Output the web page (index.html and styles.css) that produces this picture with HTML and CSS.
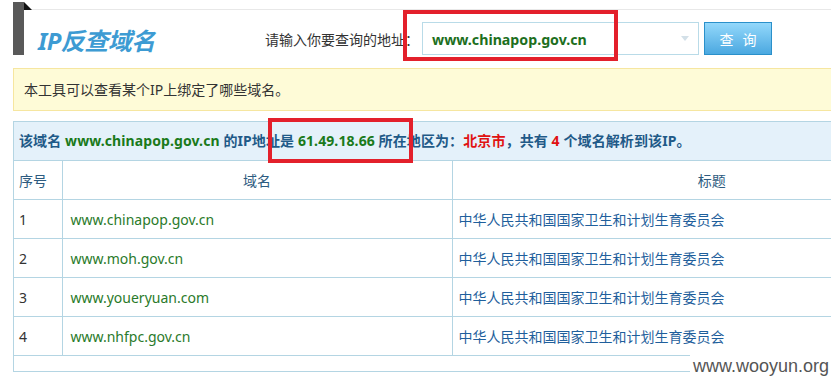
FILE: index.html
```html
<!DOCTYPE html>
<html lang="zh-CN">
<head>
<meta charset="utf-8">
<title>IP反查域名</title>
<link rel="stylesheet" href="styles.css">
</head>
<body>
<div class="page">
  <header class="top">
    <div class="bar"></div>
    <div class="head-main">
      <h1 class="title">IP反查域名</h1>
      <form class="search">
        <label class="label">请输入你要查询的地址：</label>
        <div class="input"><span class="input-text">www.chinapop.gov.cn</span><span class="caret"></span></div>
        <button type="button" class="btn">查 询</button>
      </form>
    </div>
  </header>

  <div class="notice">本工具可以查看某个IP上绑定了哪些域名。</div>

  <div class="result">
    <div class="summary">该域名 <span class="g">www.chinapop.gov.cn</span> 的IP地址是 <span class="g">61.49.18.66</span> 所在地区为：<span class="r">北京市</span>，共有 <span class="r">4</span> 个域名解析到该IP。</div>
    <table class="list">
      <colgroup><col class="w-no"><col class="w-dom"><col></colgroup>
      <thead>
        <tr><th class="c-no">序号</th><th class="c-dom">域名</th><th class="c-title">标题</th></tr>
      </thead>
      <tbody>
        <tr><td class="c-no">1</td><td class="c-dom">www.chinapop.gov.cn</td><td class="c-title">中华人民共和国国家卫生和计划生育委员会</td></tr>
        <tr><td class="c-no">2</td><td class="c-dom">www.moh.gov.cn</td><td class="c-title">中华人民共和国国家卫生和计划生育委员会</td></tr>
        <tr><td class="c-no">3</td><td class="c-dom">www.youeryuan.com</td><td class="c-title">中华人民共和国国家卫生和计划生育委员会</td></tr>
        <tr><td class="c-no">4</td><td class="c-dom">www.nhfpc.gov.cn</td><td class="c-title">中华人民共和国国家卫生和计划生育委员会</td></tr>
      </tbody>
    </table>
  </div>

  <div class="mark mark-input"></div>
  <div class="mark mark-ip"></div>
  <div class="watermark">www.wooyun.org</div>
</div>
</body>
</html>
```

FILE: styles.css
```css
html, body {
  margin: 0;
  padding: 0;
  background: #fff;
}
body {
  width: 831px;
  height: 377px;
  overflow: hidden;
  font-family: "Noto Sans", "Noto Sans CJK SC", sans-serif;
  font-size: 14px;
  color: #333;
}
.page {
  position: relative;
  width: 831px;
  height: 377px;
  overflow: hidden;
}

/* header */
.top {
  display: flex;
  padding: 2px 0 0 13px;
  height: 60px;
}
.bar {
  position: relative;
  width: 11px;
  height: 53px;
  background: #595959;
  flex: none;
}
.bar::after {
  content: "";
  position: absolute;
  left: 11px;
  top: 0;
  width: 0;
  height: 0;
  border-top: 8px solid transparent;
  border-left: 8px solid #111;
}
.head-main {
  flex: 1;
  margin-top: 7px;
  border-top: 1px solid #e8e8e8;
  display: flex;
  align-items: flex-start;
  padding: 12px 59px 0 14px;
}
.title {
  margin: 2px 0 0 0;
  font-size: 24px;
  line-height: 33px;
  font-weight: bold;
  font-style: italic;
  color: #3d9bd3;
  letter-spacing: -0.5px;
}
.search {
  margin: 0 0 0 auto;
  display: flex;
  align-items: center;
  height: 33px;
}
.label {
  color: #333;
  font-size: 14px;
  margin-right: 3px;
}
.input {
  box-sizing: border-box;
  width: 277px;
  height: 33px;
  border: 1px solid #b9dbe8;
  display: flex;
  align-items: center;
  padding: 0 9px 0 9px;
}
.input-text {
  flex: 1;
  font-weight: bold;
  font-size: 14.2px;
  color: #1d6f1d;
  padding-top: 2px;
}
.caret {
  width: 0;
  height: 0;
  border-top: 5px solid #d3e0e8;
  border-left: 4px solid transparent;
  border-right: 4px solid transparent;
}
.btn {
  box-sizing: border-box;
  margin-left: 5px;
  width: 68px;
  height: 33px;
  border: 1px solid #2a90ca;
  background: linear-gradient(#93d8fb, #4ba8e0);
  color: #fff;
  font-family: "Noto Sans CJK SC", sans-serif;
  font-size: 14px;
  letter-spacing: 3px;
  padding: 0 0 0 3px;
}

/* notice */
.notice {
  margin: 6px 0 0 13px;
  height: 41px;
  line-height: 41px;
  background: #fefbd7;
  border: 1px solid #f6e6a0;
  border-right: none;
  padding-left: 10px;
  color: #333;
}

/* result */
.result {
  margin: 10px 0 0 13px;
  width: 957px;
  border: 1px solid #b4d5e3;
  padding-bottom: 15px;
}
.summary {
  height: 38px;
  line-height: 38px;
  background: #e4f1fa;
  border-bottom: 1px solid #b4d5e3;
  padding-left: 5px;
  font-weight: bold;
  color: #1f5a88;
  white-space: nowrap;
  letter-spacing: 0.1px;
}
.summary .g { color: #1a7a1a; }
.summary .r { color: #e01212; }

.list {
  width: 100%;
  border-collapse: collapse;
  table-layout: fixed;
}
.w-no { width: 48px; }
.w-dom { width: 390px; }
.list th, .list td {
  height: 38px;
  padding: 0;
  border-bottom: 1px solid #b4d5e3;
  font-weight: normal;
  white-space: nowrap;
}
.list .c-no {
  padding-left: 5px;
  text-align: left;
  border-right: 1px solid #b4d5e3;
}
.list .c-dom {
  padding-left: 8px;
  border-right: 1px solid #b4d5e3;
}
.list .c-title {
  padding-left: 6px;
}
.list th {
  color: #2d5b80;
}
.list th.c-dom, .list th.c-title {
  text-align: center;
  padding-left: 0;
}
.list td.c-no { color: #333; }
.list td.c-dom { color: #2a7a2a; }
.list td.c-title { color: #1f5f9c; }

/* red annotation boxes */
.mark {
  position: absolute;
  box-sizing: border-box;
  border: 4px solid #e3202b;
}
.mark-input {
  left: 403px;
  top: 10px;
  width: 215px;
  height: 51px;
}
.mark-ip {
  left: 268px;
  top: 118px;
  width: 145px;
  height: 45px;
}

/* watermark */
.watermark {
  position: absolute;
  left: 690px;
  top: 355px;
  padding: 0 3px;
  background: #fff;
  font-family: "Liberation Sans", Arial, sans-serif;
  font-size: 18px;
  line-height: 22px;
  color: #555;
}
```
